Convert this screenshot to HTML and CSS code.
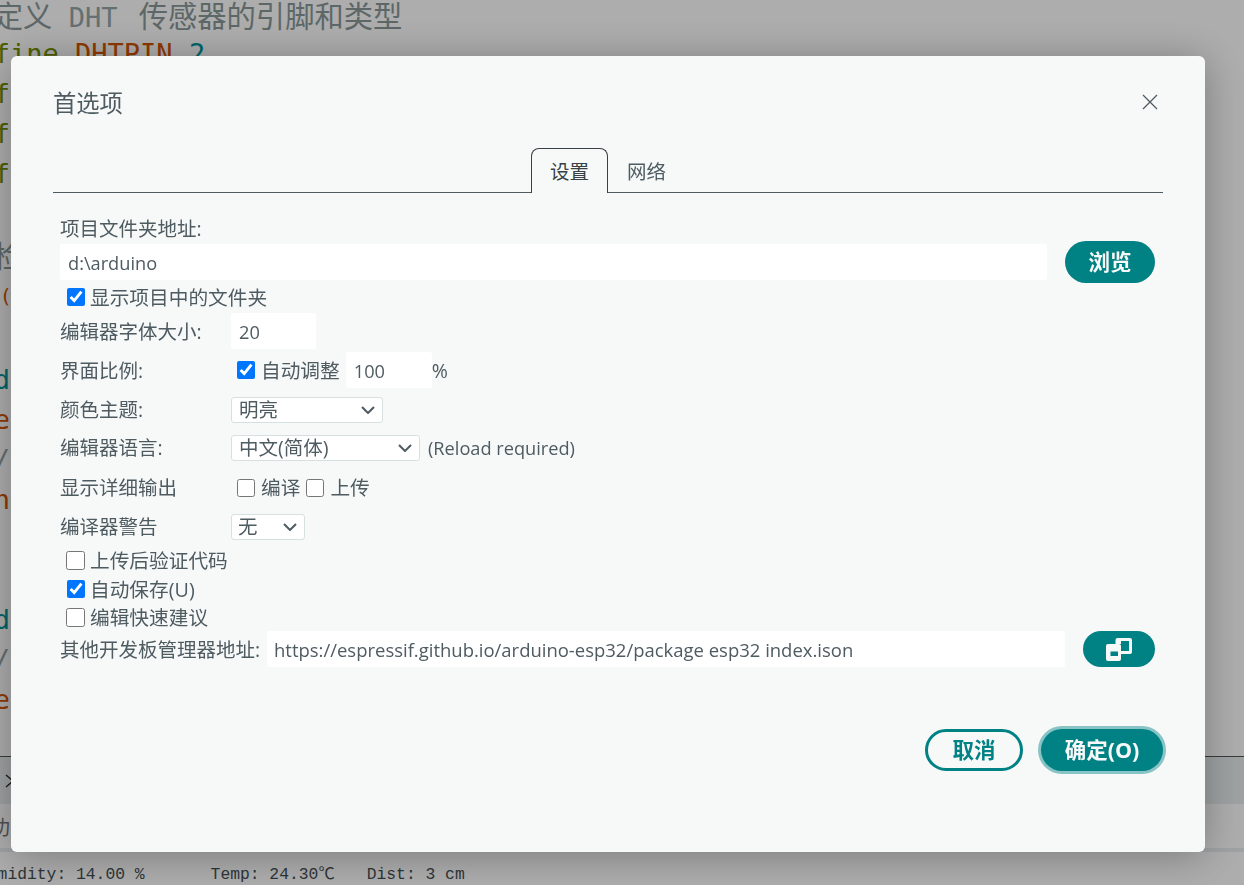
FILE: index.html
```html
<!DOCTYPE html>
<html lang="zh-CN">
<head>
<meta charset="utf-8">
<title>首选项</title>
<link rel="stylesheet" href="styles.css">
</head>
<body>
<div class="ide">
  <div class="code">
    <div class="line"><span class="com">// <span class="cjk">定义</span> DHT <span class="cjk push">传感器的引脚和类型</span></span></div>
    <div class="line"><span class="kw">#define</span> <span class="id">DHTPIN</span> <span class="num">2</span></div>
    <div class="line"><span class="kw">#define</span> <span class="id">DHTTYPE</span> <span class="num">11</span></div>
    <div class="line"><span class="kw">#define</span> <span class="id">TRIG</span> <span class="num">3</span></div>
    <div class="line"><span class="kw">#define</span> <span class="id">ECHO</span> <span class="num">4</span></div>
    <div class="line">&nbsp;</div>
    <div class="line"><span class="com">// <span class="cjk">检测</span></span></div>
    <div class="line"><span class="sp">   </span><span class="id nudge">(</span></div>
    <div class="line tall">&nbsp;</div>
    <div class="line"><span class="sp">   </span><span class="num">d</span></div>
    <div class="line"><span class="sp">   </span><span class="id">e</span></div>
    <div class="line"><span class="sp">   </span><span class="com">/</span></div>
    <div class="line"><span class="sp">   </span><span class="id">n</span></div>
    <div class="line">&nbsp;</div>
    <div class="line">&nbsp;</div>
    <div class="line"><span class="sp">   </span><span class="num">d</span></div>
    <div class="line"><span class="sp">   </span><span class="com">/</span></div>
    <div class="line"><span class="sp">   </span><span class="id">e</span></div>
  </div>
  <div class="toolbar"><svg class="chev" width="12" height="14" viewBox="0 0 12 14"><path d="M1 1l7 6-7 6" fill="none" stroke="#2d2d2d" stroke-width="1.5"/></svg></div>
  <div class="status"><span class="cjk-status">成功</span></div>
  <div class="strip"></div>
  <div class="serial">
    <span class="s1">Humidity: 14.00 %</span>
    <span class="s2">Temp: 24.30<span class="deg">℃</span></span>
    <span class="s3">Dist: 3 cm</span>
  </div>
</div>

<div class="overlay">
  <div class="dialog">
    <div class="head">
      <h1 class="title">首选项</h1>
      <svg class="close" width="16" height="16" viewBox="0 0 16 16"><path d="M1 1l14 14M15 1L1 15" fill="none" stroke="#4e5b61" stroke-width="1.3"/></svg>
    </div>
    <div class="tabs">
      <div class="tab active">设置</div>
      <div class="tab">网络</div>
    </div>
    <div class="form">
      <div class="row-label">项目文件夹地址:</div>
      <div class="row row-path">
        <input class="text grow" type="text" value="d:\arduino">
        <button class="btn primary browse">浏览</button>
      </div>
      <label class="row check-row mt3"><input class="cb" type="checkbox" checked><span>显示项目中的文件夹</span></label>
      <div class="row h36 mt3">
        <span class="label">编辑器字体大小:</span>
        <input class="text w85" type="text" value="20">
      </div>
      <div class="row h36 mt3">
        <span class="label">界面比例:</span>
        <input class="cb inl" type="checkbox" checked><span class="after">自动调整</span>
        <input class="text num-in ml6" type="text" value="100"><span>%</span>
      </div>
      <div class="row h26 mt9">
        <span class="label">颜色主题:</span>
        <select class="sel w152"><option>明亮</option></select>
      </div>
      <div class="row h26 mt12">
        <span class="label">编辑器语言:</span>
        <select class="sel w189"><option>中文(简体)</option></select>
        <span class="ml8 small">(Reload required)</span>
      </div>
      <div class="row h26 mt14">
        <span class="label">显示详细输出</span>
        <input class="cb inl" type="checkbox"><span class="after">编译</span>
        <input class="cb inl ml6" type="checkbox"><span class="after">上传</span>
      </div>
      <div class="row h26 mt13">
        <span class="label">编译器警告</span>
        <select class="sel w74"><option>无</option></select>
      </div>
      <label class="row check-row mt9"><input class="cb off" type="checkbox"><span>上传后验证代码</span></label>
      <label class="row check-row mt5"><input class="cb" type="checkbox" checked><span>自动保存(U)</span></label>
      <label class="row check-row mt4"><input class="cb off" type="checkbox"><span>编辑快速建议</span></label>
      <div class="row h36 mt1">
        <span class="label-auto">其他开发板管理器地址:</span>
        <input class="text url grow" type="text" value="https://espressif.github.io/arduino-esp32/package esp32 index.ison">
        <button class="btn primary window" aria-label="打开窗口">
          <svg width="26" height="23" viewBox="0 0 26 23"><path fill-rule="evenodd" d="M9.500 2a2 2 0 0 1 2-2H24a2 2 0 0 1 2 2v12a2 2 0 0 1-2 2h-9v-3h8V3h-8v3H9.500z" fill="#f7f9f9"/><path fill-rule="evenodd" d="M2 6h11a2 2 0 0 1 2 2v13a2 2 0 0 1-2 2H2a2 2 0 0 1-2-2V8a2 2 0 0 1 2-2zM4.500 13.500V18H12v-4.500z" fill="#f7f9f9"/></svg>
        </button>
      </div>
    </div>
    <div class="foot">
      <button class="btn ghost cancel">取消</button>
      <button class="btn primary ok">确定(O)</button>
    </div>
  </div>
</div>
</body>
</html>
```
FILE: styles.css
```css
* { box-sizing: border-box; }
html, body { margin: 0; height: 100%; overflow: hidden; background: #fff; }

.ide { height: 885px; display: flex; flex-direction: column; overflow: hidden; }
.code {
  height: 761px; overflow: hidden; margin: -6px 0 0 -55px; flex: none;
  font: 27px/40px "DejaVu Sans Mono", "Noto Sans CJK SC", monospace; color: #434f54;
}
.line { height: 40px; white-space: pre; }
.tall { height: 46px; }
.cjk { font-size: 29.300px; line-height: 40px; font-family: "Noto Sans CJK SC", sans-serif; }
.push { margin-left: 5px; }
.nudge { margin-left: 6px; font-size: 20px; }
.com { color: #95a5a6; }
.com .cjk { color: #8a9899; }
.kw { color: #728e00; }
.id { color: #d35400; }
.num { color: #00979c; }
.toolbar { height: 48px; flex: none; border-top: 1px solid #555; background: #e9efef; display: flex; align-items: center; padding: 0 0 0 5px; margin-top: 1px; }
.status { height: 44px; flex: none; background: #fff; display: flex; align-items: center; color: #777; font: 20px "Noto Sans CJK SC", sans-serif; overflow: hidden; }
.cjk-status { margin-left: -30px; }
.strip { height: 4px; flex: none; background: #e9efef; }
.serial { flex: 1; display: flex; align-items: baseline; padding-top: 10px; margin-left: -22px; font: 16.330px/20px "Liberation Mono", "Noto Sans CJK SC", monospace; color: #434f54; white-space: pre; }
.s2 { margin-left: 66px; }
.s3 { margin-left: 32px; }
.deg { font-family: "Noto Sans CJK SC", sans-serif; line-height: 20px; }

.overlay { position: fixed; inset: 0; background: rgba(0, 0, 0, .32); padding: 56px 0 0 11px; }
.dialog {
  width: 1194px; height: 796px; padding: 0 42px; background: #f7f9f9; border-radius: 6px;
  box-shadow: 0 4px 40px rgba(0, 0, 0, .3);
  color: #4e5b61; font: 18px/26px "Open Sans", "Noto Sans CJK SC", sans-serif;
}
.head { height: 92px; display: flex; justify-content: space-between; align-items: flex-start; padding-top: 30px; }
.title { margin: 0; font-size: 23.300px; line-height: 34px; font-weight: 400; }
.close { margin: 8px 5px 0 0; }
.tabs { height: 45px; display: flex; justify-content: center; border-bottom: 1px solid #4e5b61; }
.tab { width: 77px; height: 45px; display: flex; align-items: center; justify-content: center; font-size: 19.500px; padding-top: 3px; }
.tab.active { border: 1px solid #374146; border-bottom: 0; border-radius: 8px 8px 0 0; background: #f7f9f9; color: #374146; position: relative; padding-top: 2px; }

.form { padding: 23px 8px 0 7px; font-size: 19.500px; }
.row-label { height: 26px; margin-bottom: -1px; }
.row { display: flex; align-items: center; }
.h36 > span { padding-top: 2px; }
.row-path { height: 42px; }
.check-row { height: 24px; padding-left: 7px; font-size: 19.700px; }
.h36 { height: 36px; }
.h26 { height: 26px; }
.mt1 { margin-top: 1px; }
.mt3 { margin-top: 3px; }
.mt4 { margin-top: 4px; }
.mt5 { margin-top: 5px; }
.mt9 { margin-top: 9px; }
.mt12 { margin-top: 12px; }
.mt13 { margin-top: 13px; }
.mt14 { margin-top: 14px; }
.ml6 { margin-left: 6px; }
.ml8 { margin-left: 8px; }
.small { font-size: 18.200px; }
.label { width: 171px; flex: none; }
.label-auto { flex: none; width: 207px; }
.grow { flex: 1; min-width: 0; }
.text {
  height: 36px; border: 0; outline: 0; border-radius: 3px; background: #fff; padding: 2px 8px 0; color: #4e5b61;
  font: 18.200px "Open Sans", "Noto Sans CJK SC", sans-serif;
}
.url { font-size: 18.480px; padding: 0 7px; }
.num-in { width: 86px; flex: none; }
.w85 { width: 85px; flex: none; }
.after { margin-left: 6px; font-size: 19.700px; }
.cb { width: 18px; height: 18px; margin: 0 5px 2px 0; flex: none; accent-color: #0075ff; }
.off { width: 19px; height: 19px; margin-left: -1px; }
.inl { margin: 0 0 0 6px; }
.inl.ml6 { margin-left: 6px; }
.sel {
  height: 100%; appearance: none; border: 1px solid #d7e0e0; border-radius: 3px; padding: 0 0 0 7px; color: #4e5b61;
  font: 19.500px/24px "Open Sans", "Noto Sans CJK SC", sans-serif; outline: 0; background: #fff no-repeat right 7px center;
  background-image: url("data:image/svg+xml,%3Csvg xmlns='http://www.w3.org/2000/svg' width='14' height='8' viewBox='0 0 14 8'%3E%3Cpath d='M1 1l6 6 6-6' fill='none' stroke='%234e5b61' stroke-width='2'/%3E%3C/svg%3E");
}
.w152 { width: 152px; }
.w189 { width: 189px; }
.w74 { width: 74px; padding-left: 6px; }

.btn { border-radius: 21px; font: 700 21.500px "Open Sans", "Noto Sans CJK SC", sans-serif; padding: 0 0 3px; display: flex; align-items: center; justify-content: center; cursor: pointer; }
.primary { background: #008184; border: 0; color: #f7f9f9; }
.browse { width: 90px; height: 42px; margin-left: 18px; flex: none; }
.window { width: 72px; height: 36px; margin-left: 18px; flex: none; padding: 0; }
.foot { display: flex; justify-content: flex-end; gap: 18px; margin-top: 62px; }
.cancel { width: 98px; height: 42px; }
.ghost { background: transparent; border: 3px solid #008184; color: #008184; }
.ok { width: 122px; height: 42px; box-shadow: 0 0 0 3px rgba(0, 129, 132, .45); }
```
